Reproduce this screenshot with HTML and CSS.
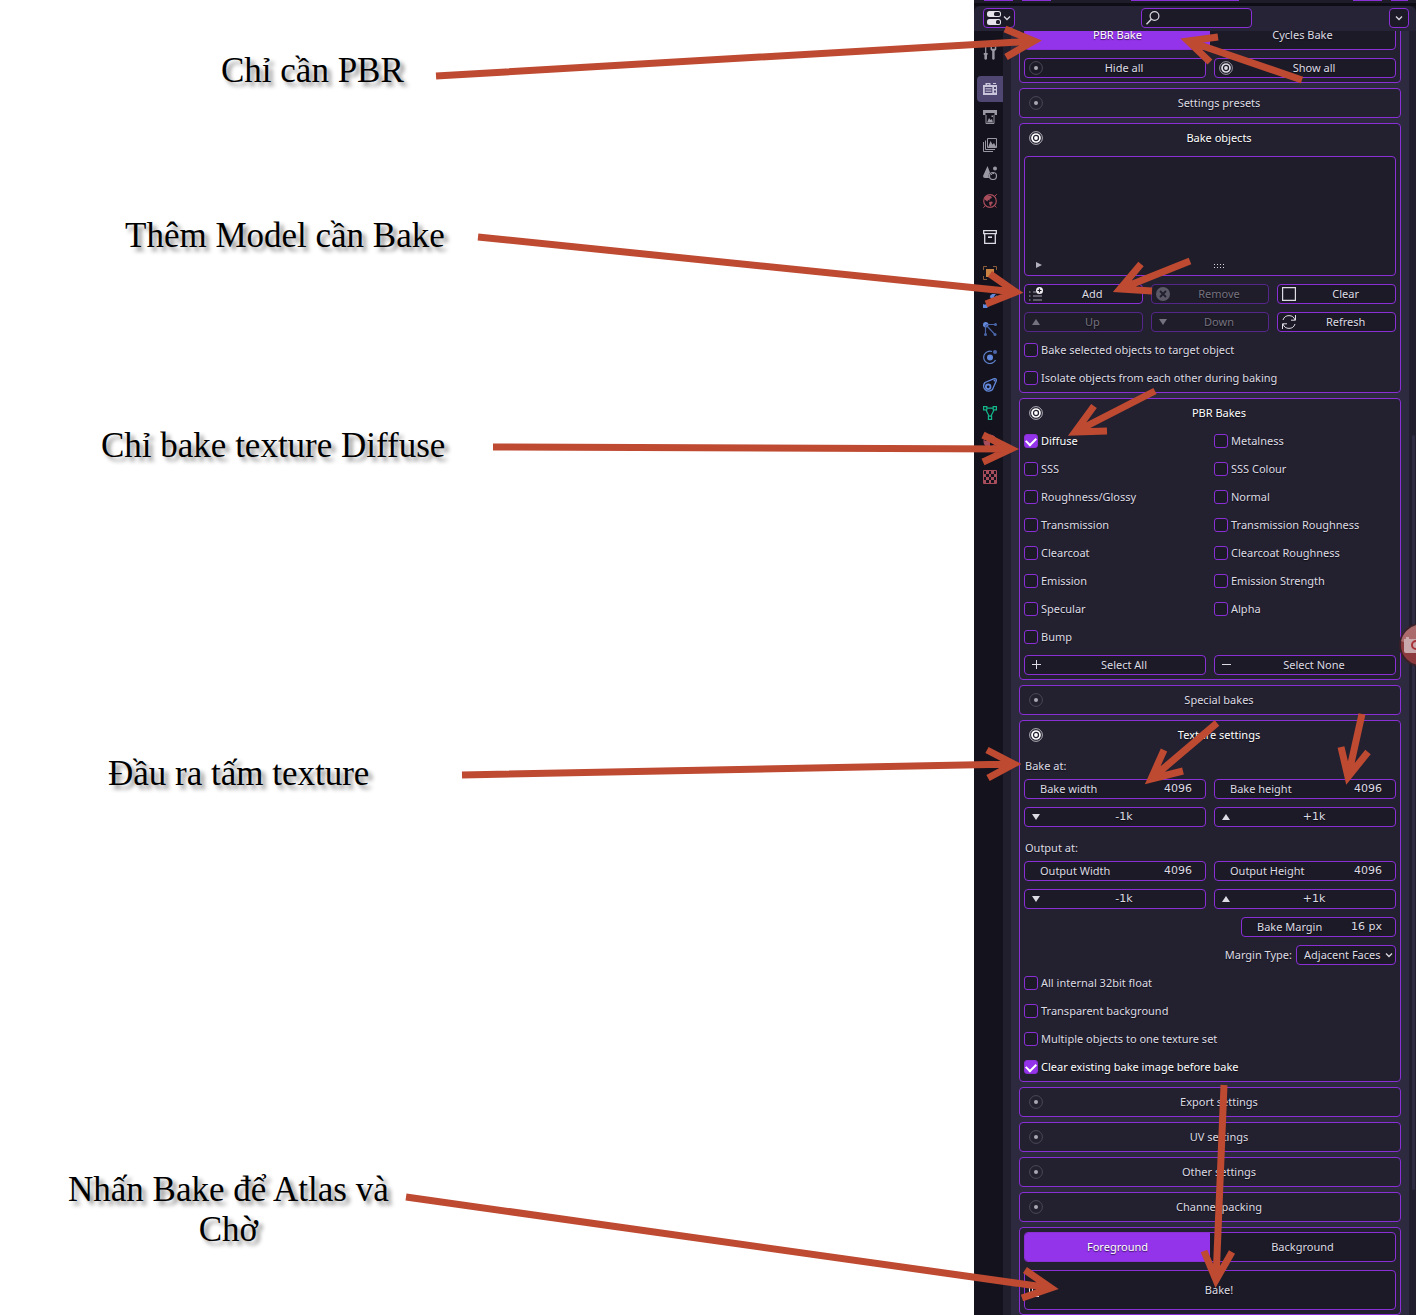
FILE: index.html
```html
<!DOCTYPE html>
<html lang="vi">
<head>
<meta charset="utf-8">
<title>Bake</title>
<link rel="stylesheet" href="styles.css">
</head>
<body>
<svg class="defs" width="0" height="0" aria-hidden="true">
  <symbol id="off" viewBox="0 0 14 14"><circle cx="7" cy="7" r="6.4" fill="none" stroke="#4b4857"/><circle cx="7" cy="7" r="2" fill="#aaa8b2"/></symbol>
  <symbol id="on" viewBox="0 0 14 14"><circle cx="7" cy="7" r="6.400" fill="none" stroke="currentColor" stroke-width=".8" opacity=".8"/><circle cx="7" cy="7" r="4" fill="none" stroke="currentColor" stroke-width="1.700"/><circle cx="7" cy="7" r="1.900" fill="currentColor"/></symbol>
  <symbol id="up" viewBox="0 0 14 14"><path d="M3 10 7 4l4 6z" fill="currentColor"/></symbol>
  <symbol id="down" viewBox="0 0 14 14"><path d="M3 4h8l-4 6z" fill="currentColor"/></symbol>
  <symbol id="chev" viewBox="0 0 8 8"><path d="M1 2.500 4 5.500 7 2.500" fill="none" stroke="#d8d6de" stroke-width="1.300"/></symbol>
</svg>
<main class="page">
  <section class="notes">
    <p class="note note-pbr">Chỉ cần PBR</p>
    <p class="note note-model">Thêm Model cần Bake</p>
    <p class="note note-diffuse">Chỉ bake texture Diffuse</p>
    <p class="note note-output">Đầu ra tấm texture</p>
    <p class="note note-bake">Nhấn Bake để Atlas và<br>Chờ</p>
  </section>

  <section class="editor">
    <div class="strip"><i class="s1"></i><i class="s2"></i><i class="s3"></i><i class="s4"></i><i class="s5"></i></div>
    <header class="bar">
      <button class="kind" aria-label="Editor type">
        <svg width="14" height="14" viewBox="0 0 14 14"><rect width="14" height="6" rx="2.500" fill="#e6e4ea"/><rect y="8" width="14" height="6" rx="2.500" fill="#e6e4ea"/><rect x="7" y="1" width="6" height="4" rx="1.500" fill="#1d1a28"/><rect x="9" y="9" width="4" height="4" rx="1.500" fill="#1d1a28"/></svg>
        <svg width="8" height="8"><use href="#chev"/></svg>
      </button>
      <label class="search">
        <svg width="14" height="14" viewBox="0 0 14 14"><circle cx="8.500" cy="5" r="4.400" fill="none" stroke="#d8d6de" stroke-width="1.200"/><path d="M5.300 8.200.5 13.200" stroke="#d8d6de" stroke-width="1.500"/></svg>
        <input type="text" aria-label="Search">
      </label>
      <button class="options" aria-label="Options"><svg width="8" height="8"><use href="#chev"/></svg></button>
    </header>

    <div class="work">
      <nav class="tabs" aria-label="Properties">
        <div class="tab-group">
          <button class="tab grey" aria-label="Tool"><svg viewBox="0 0 14 14"><path d="M2.700 0v7" stroke="currentColor" stroke-width="1.200"/><path d="M.7 7h4v1.500l-.7.5v4q-1.300 1.500-2.600 0V9l-.7-.5z" fill="currentColor"/><path d="M7.500.500v3L9.200 5.200V13q1.200 1.500 2.400 0V5.200L13.300 3.500v-3l-1.500-.5v2.700H9V0z" fill="currentColor"/></svg></button>
        </div>
        <div class="tab-group">
          <button class="tab active" aria-label="Render"><svg viewBox="0 0 14 14"><path d="M0 3h2.500V1h5v2H14v10H0zM4 2.200V3h2.300v-.8zM1.800 5v6h7.500V5zM11 5v2h2V5zm0 3.500v2h2v-2z" fill="#c9c5db" fill-rule="evenodd"/><path d="M2.500 6.500h6M2.500 8h6M2.500 9.500h6" stroke="#c9c5db" stroke-width=".7"/><path d="M10 1.500h3" stroke="#c9c5db"/></svg></button>
          <button class="tab grey" aria-label="Output"><svg viewBox="0 0 14 14"><path d="M0 0h14v5h-2.500V3h-9v2H0z" fill="currentColor"/><path d="M3 5v8.500h8V5" fill="none" stroke="currentColor"/><path d="M4 12.500 6 8l1.500 2L9 9l1 3.500z" fill="currentColor"/><path d="M8.500 5.500h1.500V7H8.500z" fill="currentColor"/></svg></button>
          <button class="tab grey" aria-label="View layer"><svg viewBox="0 0 14 14"><path d="M.5 4v9.500H10M2.500 2.500v9H12M4.500.5h9v9h-9z" fill="none" stroke="currentColor"/><path d="M5 9.500 7.500 3l2 3.500L11 5l2.500 4.500z" fill="currentColor"/></svg></button>
          <button class="tab grey" aria-label="Scene"><svg viewBox="0 0 14 14"><path d="M4.500 0 7 6.500q-2 2-1 5.500H2Q0 12 0 10z" fill="currentColor"/><circle cx="12" cy="2.500" r="2" fill="currentColor"/><circle cx="10" cy="10" r="3.500" fill="none" stroke="currentColor" stroke-width="1.200"/><path d="M8 9q1-2 3-1.500" fill="none" stroke="currentColor"/></svg></button>
          <button class="tab red" aria-label="World"><svg viewBox="0 0 14 14"><circle cx="7" cy="7" r="6.300" fill="none" stroke="currentColor" stroke-width="1.200"/><path d="M1.500 3.500 4 1.500l4 .5L9 4 6.500 5 7 6.500 5 6l-.5 1.500L1.500 5.500zM6 8l3-.5L10 9l-1.500 1L8 12.500 6.500 11z" fill="currentColor"/><path d="M12 2l1.800-1.800M.3 13.800 2 12M12 12l1.500 1.500" stroke="currentColor"/></svg></button>
        </div>
        <div class="tab-group">
          <button class="tab white" aria-label="Collection"><svg viewBox="0 0 14 14"><path d="M.7.700h12.600v3H.7zM1.700 4v9.300h10.600V4" fill="none" stroke="currentColor" stroke-width="1.300"/><path d="M5 7.200h4" stroke="currentColor" stroke-width="1.600"/></svg></button>
        </div>
        <div class="tab-group">
          <button class="tab orange" aria-label="Object"><svg viewBox="0 0 14 14"><path d="M3 3h8v8H3z" fill="currentColor"/><path d="M.5 4V.5H4M10 .5h3.500V4M13.500 10v3.500H10M4 13.500H.5V10" fill="none" stroke="#8a5c3c"/></svg></button>
          <button class="tab blue" aria-label="Modifiers"><svg viewBox="0 0 14 14"><path d="M2 12 9 5M7.500 3.500q0-3 4-3L10 2.500 11.500 4l2-1.500q0 4-4 4M1 10.500q-2 3 1 3t2.500-2" fill="currentColor" stroke="currentColor" stroke-width="1.500"/></svg></button>
          <button class="tab blue" aria-label="Particles"><svg viewBox="0 0 14 14"><circle cx="2.700" cy="2.700" r="2.700" fill="currentColor"/><path d="M3 2.500h9.500M2.500 3v9.500M3 3l9 9.500" stroke="#4a66a8" stroke-width="1.200"/><g fill="#4a66a8"><circle cx="12.500" cy="2.500" r="1.500"/><circle cx="2.500" cy="12.500" r="1.500"/><circle cx="12" cy="12.500" r="1.500"/></g></svg></button>
          <button class="tab blue" aria-label="Physics"><svg viewBox="0 0 14 14"><circle cx="7" cy="7.500" r="3" fill="currentColor"/><circle cx="12" cy="2" r="2" fill="#4a66a8"/><path d="M9 1.500A6.200 6.200 0 1 0 12.500 10" fill="none" stroke="#5d80c8" stroke-width="1.200"/></svg></button>
          <button class="tab blue" aria-label="Constraints"><svg viewBox="0 0 14 14"><path d="M2 4.500 10.500.8Q14 0 13.200 3L9.500 11.500A5 5 0 1 1 2 4.500z" fill="none" stroke="currentColor" stroke-width="1.300"/><circle cx="5.200" cy="8.800" r="2.300" fill="none" stroke="currentColor" stroke-width="1.800"/><circle cx="11.500" cy="2.500" r="1" fill="currentColor"/></svg></button>
          <button class="tab green" aria-label="Data"><svg viewBox="0 0 14 14"><path d="M3.800 2.200h6.400M2.800 3.800 6.200 10.200M11.200 3.800 7.800 10.200M.6.600h3.200v3.200H.6zM10.200.600h3.200v3.200h-3.200zM5.400 10.200h3.200v3.200H5.400z" fill="none" stroke="currentColor" stroke-width="1.200"/></svg></button>
          <button class="tab red" aria-label="Material"><svg viewBox="0 0 14 14"><circle cx="7" cy="7" r="6" fill="none" stroke="currentColor" stroke-width="1.200"/><path d="M7 7V1a6 6 0 0 1 6 6zM7 7v6a6 6 0 0 1-6-6z" fill="currentColor"/></svg></button>
        </div>
        <div class="tab-group">
          <button class="tab red" aria-label="Texture"><svg viewBox="0 0 14 14"><path d="M.5.500h13v13H.5z" fill="none" stroke="currentColor"/><path d="M3 1h3v3H3zm5 0h3v3H8zM1 4h2v3H1zm5 0h2v3H6zm5 0h2v3h-2zM3 7h3v3H3zm5 0h3v3H8zM1 10h2v3H1zm5 0h2v3H6zm5 0h2v3h-2z" fill="currentColor"/></svg></button>
        </div>
      </nav>

      <div class="panels">
        <section class="panel first">
          <div class="switch"><button class="chosen">PBR Bake</button><button>Cycles Bake</button></div>
          <div class="cols2">
            <button class="btn"><svg><use href="#off"/></svg><span>Hide all</span></button>
            <button class="btn"><svg><use href="#on"/></svg><span>Show all</span></button>
          </div>
        </section>

        <section class="panel"><button class="head"><svg><use href="#off"/></svg><span>Settings presets</span></button></section>

        <section class="panel">
          <button class="head open"><svg><use href="#on"/></svg><span>Bake objects</span></button>
          <div class="list">
            <svg class="play" viewBox="0 0 8 8"><path d="M1 1l6 3-6 3z" fill="#b3b0bd"/></svg>
            <svg class="grip" viewBox="0 0 12 6"><path d="M1 1.500h10M1 4.500h10" stroke="#d8d6de" stroke-dasharray="1 2"/></svg>
          </div>
          <div class="cols3">
            <button class="btn"><svg viewBox="0 0 14 14"><path d="M0 5h1.500M0 9h1.500M0 13h1.500M4 5h3M4 9h9M4 13h9" stroke="#a19eac"/><circle cx="10.500" cy="3.500" r="3.500" fill="#f2f0f5"/><path d="M10.500 1.500v4M8.500 3.500h4" stroke="#1d1a28" stroke-width="1.200"/></svg><span>Add</span></button>
            <button class="btn" disabled><svg viewBox="0 0 14 14"><circle cx="7" cy="7" r="7" fill="#5b5867"/><path d="M4 4l6 6M10 4l-6 6" stroke="#211e2d" stroke-width="1.800"/></svg><span>Remove</span></button>
            <button class="btn"><svg viewBox="0 0 14 14"><path d="M.6.600h12.800v12.800H.6z" fill="none" stroke="currentColor" stroke-width="1.200"/></svg><span>Clear</span></button>
            <button class="btn" disabled><svg><use href="#up"/></svg><span>Up</span></button>
            <button class="btn" disabled><svg><use href="#down"/></svg><span>Down</span></button>
            <button class="btn"><svg viewBox="0 0 14 14"><path d="M1 5a6.300 6.300 0 0 1 12 0M13.500 0v5.200H9M13 9a6.300 6.300 0 0 1-12 0M.5 14V8.800H5" fill="none" stroke="currentColor"/></svg><span>Refresh</span></button>
          </div>
          <label class="check"><input type="checkbox">Bake selected objects to target object</label>
          <label class="check"><input type="checkbox">Isolate objects from each other during baking</label>
        </section>

        <section class="panel">
          <button class="head open"><svg><use href="#on"/></svg><span>PBR Bakes</span></button>
          <div class="cols2">
            <label class="check"><input type="checkbox" checked>Diffuse</label>
            <label class="check"><input type="checkbox">Metalness</label>
            <label class="check"><input type="checkbox">SSS</label>
            <label class="check"><input type="checkbox">SSS Colour</label>
            <label class="check"><input type="checkbox">Roughness/Glossy</label>
            <label class="check"><input type="checkbox">Normal</label>
            <label class="check"><input type="checkbox">Transmission</label>
            <label class="check"><input type="checkbox">Transmission Roughness</label>
            <label class="check"><input type="checkbox">Clearcoat</label>
            <label class="check"><input type="checkbox">Clearcoat Roughness</label>
            <label class="check"><input type="checkbox">Emission</label>
            <label class="check"><input type="checkbox">Emission Strength</label>
            <label class="check"><input type="checkbox">Specular</label>
            <label class="check"><input type="checkbox">Alpha</label>
            <label class="check"><input type="checkbox">Bump</label>
          </div>
          <div class="cols2">
            <button class="btn"><svg viewBox="0 0 14 14"><path d="M7.500 2v9M3 6.500h9" stroke="currentColor"/></svg><span>Select All</span></button>
            <button class="btn"><svg viewBox="0 0 14 14"><path d="M3 6.500h9" stroke="currentColor"/></svg><span>Select None</span></button>
          </div>
        </section>

        <section class="panel"><button class="head"><svg><use href="#off"/></svg><span>Special bakes</span></button></section>

        <section class="panel">
          <button class="head open"><svg><use href="#on"/></svg><span>Texture settings</span></button>
          <div>
            <p class="caption">Bake at:</p>
            <div class="cols2">
              <label class="field">Bake width<input type="text" value="4096"></label>
              <label class="field">Bake height<input type="text" value="4096"></label>
              <button class="btn step"><svg><use href="#down"/></svg><span>-1k</span></button>
              <button class="btn step"><svg><use href="#up"/></svg><span>+1k</span></button>
            </div>
          </div>
          <div>
            <p class="caption">Output at:</p>
            <div class="cols2">
              <label class="field">Output Width<input type="text" value="4096"></label>
              <label class="field">Output Height<input type="text" value="4096"></label>
              <button class="btn step"><svg><use href="#down"/></svg><span>-1k</span></button>
              <button class="btn step"><svg><use href="#up"/></svg><span>+1k</span></button>
            </div>
          </div>
          <label class="field margin">Bake Margin<input type="text" value="16 px"></label>
          <div class="choice">
            <label for="margin-type">Margin Type:</label>
            <span class="select"><select id="margin-type"><option>Adjacent Faces</option><option>Extend</option></select><svg class="arrow"><use href="#chev"/></svg></span>
          </div>
          <label class="check"><input type="checkbox">All internal 32bit float</label>
          <label class="check"><input type="checkbox">Transparent background</label>
          <label class="check"><input type="checkbox">Multiple objects to one texture set</label>
          <label class="check"><input type="checkbox" checked>Clear existing bake image before bake</label>
        </section>

        <section class="panel"><button class="head"><svg><use href="#off"/></svg><span>Export settings</span></button></section>
        <section class="panel"><button class="head"><svg><use href="#off"/></svg><span>UV settings</span></button></section>
        <section class="panel"><button class="head"><svg><use href="#off"/></svg><span>Other settings</span></button></section>
        <section class="panel"><button class="head"><svg><use href="#off"/></svg><span>Channel packing</span></button></section>

        <section class="panel">
          <div class="switch"><button class="chosen">Foreground</button><button>Background</button></div>
          <button class="btn tall"><svg viewBox="0 0 14 14"><path d="M.5 1v12.500H10M3.500 4v7M6 7v4" fill="none" stroke="currentColor"/></svg><span>Bake!</span></button>
        </section>
      </div>
      <div class="scroll"><span class="thumb"></span></div>
    </div>
  </section>

  <svg class="camera" width="17" height="48" viewBox="0 0 17 48" aria-hidden="true">
    <circle cx="22" cy="24" r="21" fill="#8d3a3f" stroke="#3a2029" stroke-width="2"/>
    <path d="M2 20A21 21 0 0 1 17 4v15Q9 24 2 20z" fill="#c08a88" opacity=".6"/>
    <path d="M5 18h2v-2h3v2h7v14H7q-2 0-2-2z" fill="#c9a9ab"/>
    <circle cx="17" cy="24" r="4" fill="none" stroke="#a8323a" stroke-width="2"/>
  </svg>

  <svg class="arrows" width="1416" height="1315" viewBox="0 0 1416 1315" aria-hidden="true">
    <path d="M436 76 1034 41M1005 29 1034 41 1006 57"/>
    <path d="M478 237 1016 292M990 274 1016 292 986 304"/>
    <path d="M493 447 1011 449M983 435 1011 449 983 462"/>
    <path d="M462 775 1014 764M987 750 1014 764 988 778"/>
    <path d="M406 1197 1051 1288M1025 1270 1051 1288 1022 1298"/>
    <path d="M1302 80 1188 41M1218 37 1188 41 1210 62"/>
    <path d="M1190 261 1120 289M1141 264 1120 289 1152 291"/>
    <path d="M1155 391 1075 432M1094 406 1075 432 1107 431"/>
    <path d="M1217 723 1151 779M1164 750 1151 779 1183 771"/>
    <path d="M1362 714 1348 777M1341 747 1348 777 1368 752"/>
    <path d="M1224 1085 1216 1280M1204 1251 1216 1280 1232 1252"/>
  </svg>
</main>
</body>
</html>
```

FILE: styles.css
```css
:root {
  --edge: #8a2fd6;
  --accent: #9333ea;
  --well: #1d1a28;
  --panel: #232030;
  --text: #dddbe3;
}

* { box-sizing: border-box; }

body {
  margin: 0;
  background: #fff;
}

button, input, select { font: inherit; color: inherit; }

.defs { position: absolute; }

.page {
  position: relative;
  display: flex;
  min-height: 100vh;
  overflow: hidden;
}

/* Remarks, placed freely on the white canvas */
.notes {
  position: relative;
  flex: 1;
}

.note {
  position: absolute;
  margin: 0;
  font: 35px/40px "Liberation Serif", serif;
  text-align: center;
  white-space: nowrap;
  color: #000;
  text-shadow: 4px 4px 4px rgba(0, 0, 0, .45);
}

.note-pbr { left: 221px; top: 51px; }
.note-model { left: 125px; top: 216px; }
.note-diffuse { left: 101px; top: 426px; }
.note-output { left: 108px; top: 754px; }
.note-bake { left: 68px; top: 1170px; }

.arrows {
  position: absolute;
  left: 0;
  top: 0;
  fill: none;
  stroke: #be4a32;
  stroke-width: 7;
  stroke-miterlimit: 8;
  pointer-events: none;
}

.camera {
  position: absolute;
  right: 0;
  top: 621px;
}

/* Properties editor */
.editor {
  display: flex;
  flex-direction: column;
  width: 442px;
  background: #14121d;
  color: var(--text);
  font: 11px/14px "Noto Sans", sans-serif;
  text-shadow: 0 1px 1px rgba(0, 0, 0, .6);
}

.strip {
  display: flex;
  height: 6px;
  padding: 0 8px 0 10px;
  border-bottom: 3px solid #0e0c15;
  background: #1f1c2a;
}

.strip i {
  height: 1px;
  background: var(--edge);
}

.s1, .s2, .s4 { width: 29px; }
.s2 { margin-left: 9px; }
.s3 { width: 108px; margin-left: 80px; }
.s4 { margin-left: auto; }
.s5 { width: 17px; margin-left: 9px; }

.bar {
  display: grid;
  grid-template-columns: 1fr 111px 1fr;
  height: 25px;
  padding: 2px 7px 3px 9px;
  border-radius: 6px 6px 0 0;
  background: #262336;
}

.kind, .search, .options {
  display: flex;
  align-items: center;
  justify-content: center;
  gap: 2px;
  height: 20px;
  padding: 0 4px;
  border: 1px solid var(--edge);
  border-radius: 4px;
  background: var(--well);
}

.kind { width: 32px; }
.options { width: 20px; justify-self: end; }
.kind svg, .options svg, .search svg { flex: none; }

.search input {
  min-width: 0;
  flex: 1;
  padding: 0;
  border: 0;
  background: none;
  outline: 0;
}

.work {
  display: flex;
  flex: 1;
  overflow: hidden;
}

.tabs {
  display: flex;
  flex-direction: column;
  gap: 8px;
  width: 29px;
  padding: 8px 0 0 3px;
}

.tab-group { display: flex; flex-direction: column; }

.tab {
  display: grid;
  place-items: center;
  height: 26px;
  margin: 1px 0;
  padding: 0;
  border: 0;
  border-radius: 4px 0 0 4px;
  background: none;
}

.tab svg { width: 14px; height: 14px; }
.active { background: #4f4672; }
.grey { color: #9a98a3; }
.red { color: #a84d5b; }
.white { color: #dedce4; }
.orange { color: #c98242; }
.blue { color: #6389dc; }
.green { color: #14b58a; }

.panels {
  display: flex;
  flex-direction: column;
  gap: 5px;
  flex: 1;
  padding: 0 8px;
  border-left: 8px solid #211e2d;
  background: #2d293e;
}

.scroll {
  width: 7px;
  padding: 404px 1px 0 3px;
  background: #211e2d;
}

.thumb {
  display: block;
  height: 755px;
  border-radius: 2px;
  background: #2f2b42;
}

.panel {
  display: flex;
  flex-direction: column;
  gap: 8px;
  padding: 4px;
  border: 1px solid var(--edge);
  border-radius: 4px;
  background: var(--panel);
}

/* The list is scrolled, so its first panel starts above the view */
.first { margin-top: -16px; }

.head, .btn {
  display: flex;
  align-items: center;
  height: 20px;
  padding: 0 0 0 4px;
  border: 1px solid transparent;
  border-radius: 4px;
  background: none;
  text-shadow: inherit;
}

.head svg, .btn svg {
  flex: none;
  width: 14px;
  height: 14px;
}

.head span, .btn span { flex: 1; }
.open { color: #fff; }

.btn {
  border-color: var(--edge);
  background: var(--well);
}

.btn:disabled {
  border-color: #55268a;
  background: #201d2b;
  color: #75727f;
}

.tall { height: 40px; }

.cols2, .cols3 {
  display: grid;
  grid-template-columns: repeat(2, minmax(0, 1fr));
  gap: 8px;
}

.cols3 { grid-template-columns: repeat(3, minmax(0, 1fr)); }

.switch {
  display: flex;
  height: 30px;
  overflow: hidden;
  border: 1px solid var(--edge);
  border-radius: 4px;
  background: var(--well);
}

.switch button {
  flex: 1;
  padding: 0;
  border: 0;
  background: none;
  text-shadow: inherit;
}

.switch .chosen {
  background: var(--accent);
  color: #fff;
}

.list {
  display: grid;
  grid-template-columns: 1fr 12px 170px;
  align-items: end;
  height: 120px;
  padding: 0 0 6px 10px;
  border: 1px solid var(--edge);
  border-radius: 4px;
  background: #201d2b;
}

.play { width: 8px; height: 8px; }
.grip { width: 12px; height: 6px; }

.check {
  display: flex;
  align-items: center;
  gap: 3px;
  height: 20px;
  white-space: nowrap;
}

.check input {
  appearance: none;
  display: grid;
  place-items: center;
  width: 14px;
  height: 14px;
  margin: 0;
  border: 1px solid var(--edge);
  border-radius: 3px;
  background: var(--well);
}

.check input:checked { background: var(--accent); }

.check input:checked::after {
  content: "";
  width: 8px;
  height: 5px;
  margin-bottom: 2px;
  border: solid #fff;
  border-width: 0 0 2px 2px;
  transform: rotate(-45deg);
}

.check:has(:checked) { color: #fff; }

.caption {
  margin: 0;
  padding-left: 1px;
  line-height: 26px;
}

.field {
  display: flex;
  align-items: center;
  height: 20px;
  padding: 0 13px 0 15px;
  border: 1px solid var(--edge);
  border-radius: 4px;
  background: var(--well);
  white-space: nowrap;
}

.field input {
  flex: 1;
  min-width: 0;
  padding: 0;
  border: 0;
  background: none;
  text-align: right;
  text-shadow: inherit;
}

.field input, .step { font-family: "DejaVu Sans", sans-serif; }

.margin { width: 155px; align-self: end; }

.choice {
  display: flex;
  align-items: center;
  justify-content: end;
  gap: 4px;
}

.select {
  display: grid;
  align-items: center;
}

.select select, .arrow { grid-area: 1 / 1; }

.select select {
  appearance: none;
  width: 100px;
  height: 20px;
  padding: 0 0 0 7px;
  border: 1px solid var(--edge);
  border-radius: 4px;
  background: var(--well);
  text-shadow: inherit;
}

.arrow {
  justify-self: end;
  width: 8px;
  height: 8px;
  margin-right: 3px;
  pointer-events: none;
}
```
